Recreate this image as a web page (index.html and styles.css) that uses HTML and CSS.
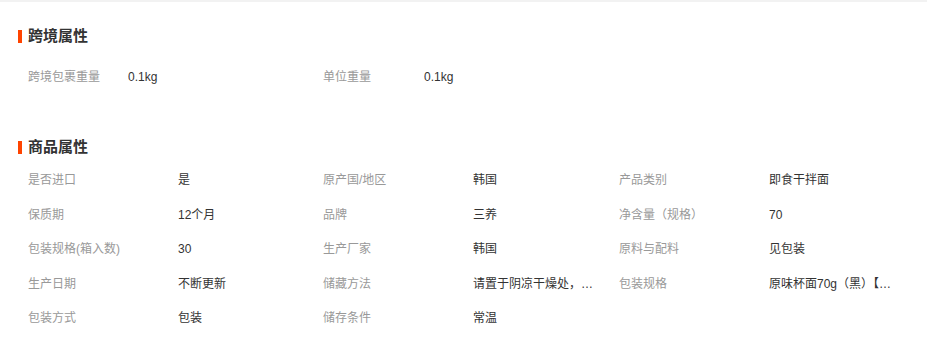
FILE: index.html
```html
<!DOCTYPE html>
<html lang="zh-CN">
<head>
<meta charset="utf-8">
<title>属性</title>
<link rel="stylesheet" href="styles.css">
</head>
<body>
<div class="page">
  <section class="block block-cross">
    <h2 class="title">跨境属性</h2>
    <div class="grid grid-cross">
      <span class="label">跨境包裹重量</span><span class="value">0.1kg</span>
      <span class="label">单位重量</span><span class="value">0.1kg</span>
    </div>
  </section>
  <section class="block block-goods">
    <h2 class="title">商品属性</h2>
    <div class="grid grid-goods">
      <span class="label">是否进口</span><span class="value">是</span>
      <span class="label">原产国/地区</span><span class="value">韩国</span>
      <span class="label">产品类别</span><span class="value">即食干拌面</span>

      <span class="label">保质期</span><span class="value">12个月</span>
      <span class="label">品牌</span><span class="value">三养</span>
      <span class="label">净含量（规格）</span><span class="value">70</span>

      <span class="label">包装规格(箱入数)</span><span class="value">30</span>
      <span class="label">生产厂家</span><span class="value">韩国</span>
      <span class="label">原料与配料</span><span class="value">见包装</span>

      <span class="label">生产日期</span><span class="value">不断更新</span>
      <span class="label">储藏方法</span><span class="value" title="请置于阴凉干燥处，避免阳光直射">请置于阴凉干燥处，避免阳光直射</span>
      <span class="label">包装规格</span><span class="value" title="原味杯面70g（黑）【杯装】">原味杯面70g（黑）【杯装】</span>

      <span class="label">包装方式</span><span class="value">包装</span>
      <span class="label">储存条件</span><span class="value">常温</span>
    </div>
  </section>
</div>
</body>
</html>
```

FILE: styles.css
```css
html, body {
  margin: 0;
  padding: 0;
  background: #fff;
}

body {
  font-family: "Liberation Sans", "Noto Sans CJK SC", sans-serif;
  font-size: 12px;
  color: #333;
}

.page {
  border-top: 2px solid #f2f2f2;
  width: 927px;
  height: 342px;
  overflow: hidden;
}

.title {
  margin: 0;
  height: 20px;
  line-height: 20px;
  font-size: 15px;
  font-weight: bold;
  color: #333;
  display: flex;
  align-items: center;
  padding-left: 18px;
}

.title::before {
  content: "";
  width: 4px;
  height: 13px;
  background: #ff4400;
  margin-right: 6px;
}

.block-cross {
  padding-top: 24px;
}

.block-goods {
  padding-top: 43px;
}

.grid {
  display: grid;
  padding-left: 28px;
}

.grid-cross {
  margin-top: 14px;
  grid-template-columns: 100px 195px 101px 1fr;
  grid-auto-rows: 34px;
}

.grid-goods {
  margin-top: 6px;
  grid-template-columns: 150px 145px 150px 146px 150px 1fr;
  grid-auto-rows: 34.5px;
}

.label,
.value {
  display: block;
  line-height: 34px;
  white-space: nowrap;
}

.label {
  color: #999;
}

.value {
  color: #333;
  max-width: 130px;
  overflow: hidden;
  text-overflow: ellipsis;
}
```
